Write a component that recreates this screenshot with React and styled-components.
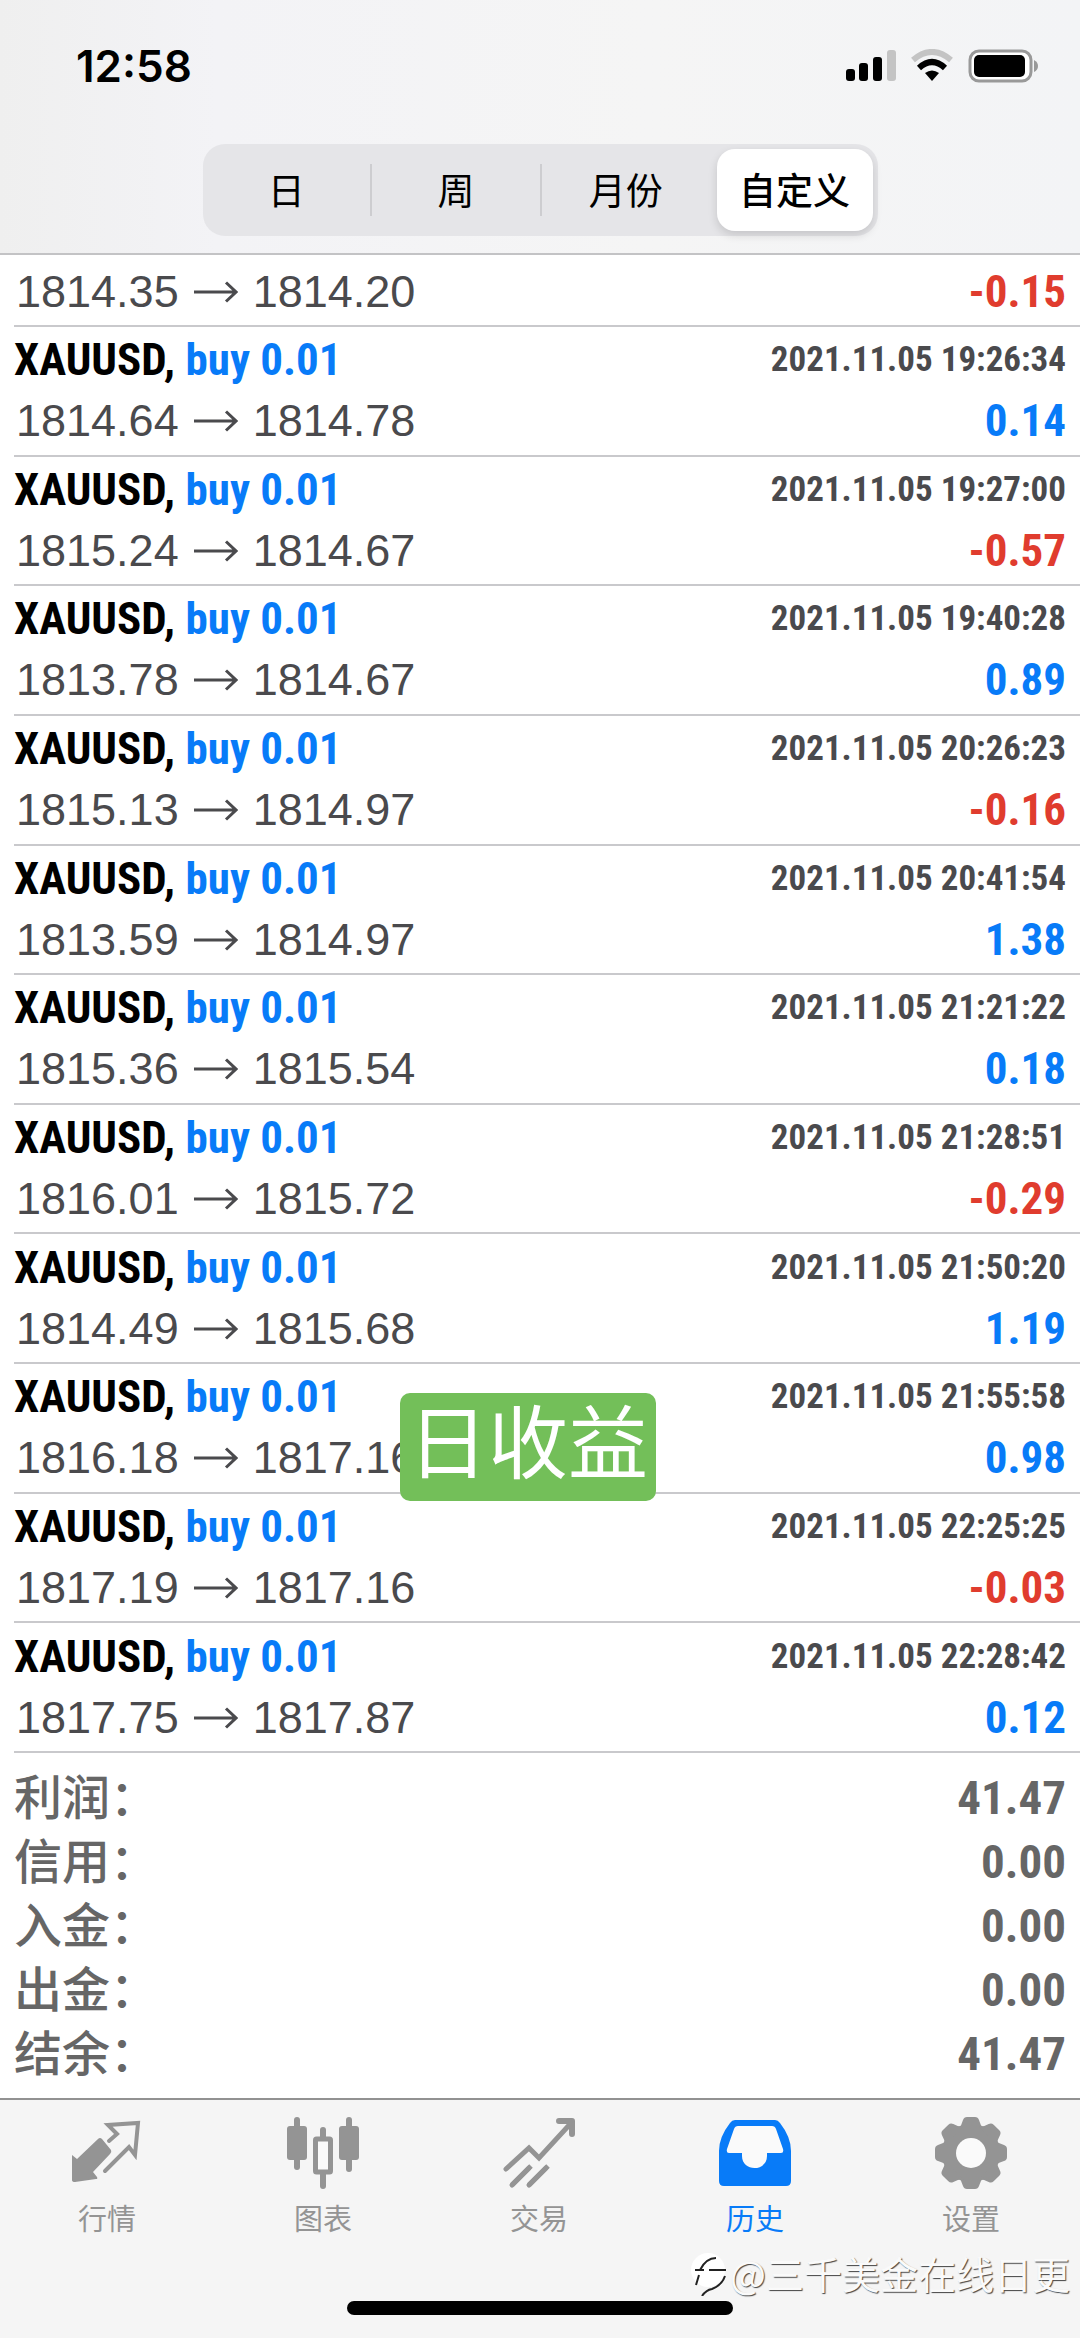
import React from "react";
import styled, { createGlobalStyle } from "styled-components";

const Global = createGlobalStyle`
  * { box-sizing: border-box; }
  body { margin: 0; background: #fff; }
`;

const sans = `Inter, "Noto Sans CJK SC", sans-serif`;
const cjk = `"Noto Sans CJK SC", sans-serif`;
const narrow = `"Roboto Condensed", Roboto, sans-serif`;

const Screen = styled.div`
  display: flex;
  flex-direction: column;
  min-height: 100vh;
  background: #fff;
`;

const Header = styled.header`
  display: flex;
  flex-direction: column;
  background: linear-gradient(90deg, #efefef, #f3f3f6 20%, #f5f5f5 60%, #f3f4f6);
  border-bottom: 2px solid #c3c3c5;
`;

const StatusBar = styled.div`
  display: flex;
  align-items: center;
  justify-content: space-between;
  height: 132px;
  padding: 0 41px 0 76px;
`;

const Clock = styled.time`
  font: 600 44px/48px ${sans};
  color: #000;
`;

const StatusIcons = styled.div`
  display: flex;
  align-items: center;
`;

const Segments = styled.div`
  display: flex;
  align-items: center;
  align-self: center;
  width: 62.5%;
  height: 92px;
  margin: 12px 0 17px;
  padding-right: 5px;
  border-radius: 22px;
  background: #e5e5e8;
`;

const Segment = styled.button`
  flex: ${(p) => (p.$active ? "0 0 156px" : "1")};
  height: ${(p) => (p.$active ? "82px" : "52px")};
  margin-left: ${(p) => (p.$active ? "7px" : "0")};
  padding: 0 0 2px;
  border: 0;
  border-left: ${(p) => (p.$divided ? "2px solid #cdcdd0" : "0")};
  border-radius: ${(p) => (p.$active ? "18px" : "0")};
  background: ${(p) => (p.$active ? "#fff" : "transparent")};
  box-shadow: ${(p) => (p.$active ? "0 4px 10px rgba(0, 0, 0, 0.14)" : "none")};
  font: ${(p) => (p.$active ? 500 : 400)} 37px/50px ${cjk};
  color: #000;
`;

const History = styled.ul`
  display: flex;
  flex: 1;
  flex-direction: column;
  margin: 0;
  padding: 0 0 0 14px;
  list-style: none;
`;

const Deal = styled.li`
  position: relative;
  display: flex;
  flex: ${(p) => (p.$clipped ? "0 0 72px" : "1 0 auto")};
  flex-direction: column;
  justify-content: flex-end;
  padding: 0 14px 3px 0;
  border-bottom: 2px solid #c9c9cc;
  overflow: ${(p) => (p.$clipped ? "hidden" : "visible")};
`;

const Line = styled.div`
  display: flex;
  align-items: center;
  justify-content: space-between;
  height: 61px;
  flex: none;
`;

const Symbol = styled.span`
  font: 700 45px/60px ${narrow};
  color: #000;
`;

const Side = styled.span`
  color: #087bf8;
`;

const Stamp = styled.time`
  font: 700 35px/60px ${narrow};
  color: #4a4a4d;
`;

const Prices = styled.span`
  display: flex;
  align-items: center;
  gap: 15px;
  padding-left: 2px;
  font: 400 45px/60px "Liberation Sans", sans-serif;
  color: #4a4a4d;
`;

const Profit = styled.span`
  font: 700 45px/60px ${narrow};
  color: ${(p) => (p.$loss ? "#e03c2e" : "#087bf8")};
`;

const Badge = styled.span`
  position: absolute;
  left: 386px;
  top: 29px;
  z-index: 1;
  padding: 0 8px 20px;
  border-radius: 10px;
  background: #73bf59;
  font: 400 80px/88px ${cjk};
  color: #fff;
  white-space: nowrap;
`;

const Summary = styled.dl`
  margin: 0;
  padding: 13px 14px 12px;
`;

const Total = styled.div`
  display: flex;
  align-items: center;
  justify-content: space-between;
  height: 64px;
  color: #666;
`;

const Term = styled.dt`
  padding-bottom: 8px;
  font: 500 48px/56px ${cjk};
`;

const Amount = styled.dd`
  margin: 0;
  font: 700 47px/64px ${narrow};
`;

const Footer = styled.footer`
  position: relative;
  display: flex;
  flex-direction: column;
  align-items: center;
  height: 240px;
  border-top: 2px solid #929292;
  background: #f5f5f5;
`;

const Tabs = styled.nav`
  display: grid;
  grid-template-columns: repeat(5, 1fr);
  width: 100%;
`;

const Tab = styled.a`
  display: flex;
  flex-direction: column;
  align-items: center;
  padding: 17px 2px 0 0;
  gap: 6px;
  font: 400 29px/36px ${cjk};
  color: ${(p) => (p.$active ? "#087bf8" : "#949494")};
  text-decoration: none;
`;

const HomeBar = styled.div`
  width: 386px;
  height: 14px;
  margin-top: auto;
  margin-bottom: 23px;
  border-radius: 7px;
  background: #000;
`;

const Watermark = styled.div`
  position: absolute;
  right: 10px;
  bottom: 38px;
  display: flex;
  align-items: center;
  font: 400 38px/54px ${cjk};
  color: #fafafa;
  text-shadow: 1px 1px 1px #444;
`;

const deals = [
  ["2021.11.05 19:26:34", "1814.64", "1814.78", "0.14"],
  ["2021.11.05 19:27:00", "1815.24", "1814.67", "-0.57"],
  ["2021.11.05 19:40:28", "1813.78", "1814.67", "0.89"],
  ["2021.11.05 20:26:23", "1815.13", "1814.97", "-0.16"],
  ["2021.11.05 20:41:54", "1813.59", "1814.97", "1.38"],
  ["2021.11.05 21:21:22", "1815.36", "1815.54", "0.18"],
  ["2021.11.05 21:28:51", "1816.01", "1815.72", "-0.29"],
  ["2021.11.05 21:50:20", "1814.49", "1815.68", "1.19"],
  ["2021.11.05 21:55:58", "1816.18", "1817.16", "0.98", "日收益"],
  ["2021.11.05 22:25:25", "1817.19", "1817.16", "-0.03"],
  ["2021.11.05 22:28:42", "1817.75", "1817.87", "0.12"],
];

const totals = [
  ["利润：", "41.47"],
  ["信用：", "0.00"],
  ["入金：", "0.00"],
  ["出金：", "0.00"],
  ["结余：", "41.47"],
];

const Arrow = () => (
  <svg width="44" height="24" viewBox="0 0 44 24" fill="none" stroke="currentColor" strokeWidth="3" aria-hidden="true">
    <path d="M0 12H42M32 2.500L42 12L32 21.500" />
  </svg>
);

const QuotesIcon = () => (
  <svg width="76" height="76" viewBox="0 0 76 76" aria-hidden="true">
    <path fill="currentColor" d="M3 38L8 42L29 22Q31 20 33 22L42 33Q43 35 41 37L24 55L28 60Q29 62 27 62L6 65Q3 65 3 63Z" />
    <path fill="none" stroke="currentColor" strokeWidth="4" strokeLinecap="round" strokeLinejoin="miter" d="M40 24L48 17L39 8L69 6L66 38L60 30L36 54" />
  </svg>
);

const ChartIcon = () => (
  <svg width="76" height="76" viewBox="0 0 76 76" aria-hidden="true">
    <g fill="currentColor">
      <rect x="2" y="9" width="20" height="34" rx="3" />
      <rect x="9" y="0" width="6" height="53" rx="3" />
      <rect x="54" y="9" width="20" height="34" rx="3" />
      <rect x="61" y="0" width="6" height="55" rx="3" />
      <rect x="35" y="10" width="6" height="14" rx="3" />
      <rect x="35" y="54" width="6" height="18" rx="3" />
    </g>
    <rect x="30.500" y="22" width="15" height="33" rx="1" fill="#fafafa" stroke="currentColor" strokeWidth="5" />
  </svg>
);

const TradeIcon = () => (
  <svg width="76" height="76" viewBox="0 0 76 76" fill="none" stroke="currentColor" strokeWidth="5" strokeLinecap="round" aria-hidden="true">
    <path d="M5 52L28 31L38 41L71 5" />
    <path strokeWidth="6" strokeLinejoin="round" d="M58 4H71V17" />
    <path d="M11 68L28 51M28 68L45 51" />
    <path strokeLinecap="butt" d="M11 68L30 49M28 68L47 49" />
  </svg>
);

const HistoryIcon = () => (
  <svg width="76" height="76" viewBox="0 0 76 76" aria-hidden="true">
    <path fill="currentColor" d="M18 3H58Q61 3 63 6Q74 20 74 34V64Q74 69 69 69H7Q2 69 2 64V34Q2 20 13 6Q15 3 18 3Z" />
    <path fill="#fafafa" d="M21 9Q18 9 17 12L10 32Q9 36 12 36H25V39C25 55 50 55 50 39V36H64Q67 36 66 32L59 12Q58 9 55 9Z" />
  </svg>
);

const SettingsIcon = () => (
  <svg width="76" height="76" viewBox="0 0 76 76" aria-hidden="true">
    <g fill="currentColor">
      <circle cx="38" cy="36" r="29" />
      {[0, 45, 90, 135, 180, 225, 270, 315].map((a) => (
        <path key={a} transform={`rotate(${a} 38 36)`} d="M25 12Q29 8 30 3Q31 0 34 0H42Q45 0 46 3Q47 8 51 12Z" />
      ))}
    </g>
    <circle cx="38" cy="36" r="15" fill="#fafafa" />
  </svg>
);

const tabs = [
  ["行情", QuotesIcon],
  ["图表", ChartIcon],
  ["交易", TradeIcon],
  ["历史", HistoryIcon],
  ["设置", SettingsIcon],
];

const StatusGlyphs = () => (
  <svg width="193" height="34" viewBox="0 0 193 34" aria-hidden="true">
    <rect x="0" y="20" width="9" height="12" rx="3" />
    <rect x="13" y="14" width="9" height="18" rx="3" />
    <rect x="27" y="8" width="9" height="24" rx="3" />
    <rect x="41" y="1" width="9" height="31" rx="3" fill="#c4c4c4" />
    <g fill="none" strokeWidth="6">
      <path d="M67 11Q86 -5 105 11" stroke="#c4c4c4" />
      <path d="M73 19Q86 7 99 19" stroke="#000" />
    </g>
    <path d="M79 24Q86 19 93 24L86 32Z" />
    <rect x="124" y="2" width="61" height="30" rx="9" fill="#fff" stroke="#999" strokeWidth="3" />
    <rect x="128" y="6" width="51" height="22" rx="5" />
    <path d="M188 11Q192 13 192 17Q192 21 188 23Z" fill="#999" />
  </svg>
);

const WatermarkLogo = () => (
  <svg width="40" height="46" viewBox="0 0 40 46" aria-hidden="true">
    <circle cx="18" cy="20" r="17" fill="#fff" />
    <path d="M5 20H14M19 20H36M10 20Q16 8 26 8M9 25L6 35M35 26Q32 35 22 39Q16 40 12 46" fill="none" stroke="#222" strokeWidth="2" />
  </svg>
);

function DealLine({ from, to, profit }) {
  return (
    <Line>
      <Prices>
        {from}
        <Arrow />
        {to}
      </Prices>
      <Profit $loss={profit.startsWith("-")}>{profit}</Profit>
    </Line>
  );
}

export default function App() {
  return (
    <Screen>
      <Global />
      <Header>
        <StatusBar>
          <Clock>12:58</Clock>
          <StatusIcons>
            <StatusGlyphs />
          </StatusIcons>
        </StatusBar>
        <Segments>
          <Segment type="button">日</Segment>
          <Segment type="button" $divided>周</Segment>
          <Segment type="button" $divided>月份</Segment>
          <Segment type="button" $active>自定义</Segment>
        </Segments>
      </Header>
      <History>
        <Deal $clipped>
          <DealLine from="1814.35" to="1814.20" profit="-0.15" />
        </Deal>
        {deals.map(([time, from, to, profit, badge]) => (
          <Deal key={time}>
            <Line>
              <Symbol>
                XAUUSD, <Side>buy 0.01</Side>
              </Symbol>
              <Stamp>{time}</Stamp>
            </Line>
            <DealLine from={from} to={to} profit={profit} />
            {badge && <Badge>{badge}</Badge>}
          </Deal>
        ))}
      </History>
      <Summary>
        {totals.map(([term, amount]) => (
          <Total key={term}>
            <Term>{term}</Term>
            <Amount>{amount}</Amount>
          </Total>
        ))}
      </Summary>
      <Footer>
        <Tabs>
          {tabs.map(([label, Icon]) => (
            <Tab key={label} href="#" $active={label === "历史"}>
              <Icon />
              {label}
            </Tab>
          ))}
        </Tabs>
        <HomeBar />
        <Watermark>
          <WatermarkLogo />
          @三千美金在线日更
        </Watermark>
      </Footer>
    </Screen>
  );
}
